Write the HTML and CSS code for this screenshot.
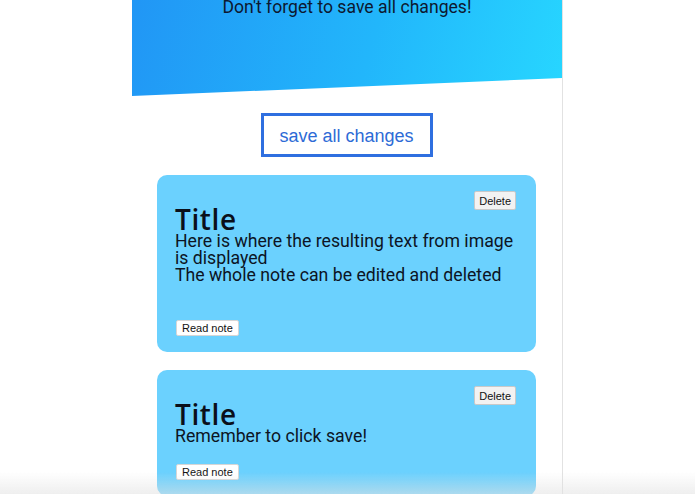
FILE: index.html
```html
<!DOCTYPE html>
<html>
<head>
<meta charset="utf-8">
<link rel="stylesheet" href="styles.css">
</head>
<body>
<div class="page">
  <header class="hero">
    <p class="hero-text">Don't forget to save all changes!</p>
  </header>
  <div class="actions">
    <button class="save-btn">save all changes</button>
  </div>
  <div class="notes">
    <div class="note">
      <div class="note-top"><button class="small-btn">Delete</button></div>
      <h2 class="note-title">Title</h2>
      <div class="note-text">Here is where the resulting text from image is displayed<br>The whole note can be edited and deleted</div>
      <button class="small-btn read-btn">Read note</button>
    </div>
    <div class="note">
      <div class="note-top"><button class="small-btn">Delete</button></div>
      <h2 class="note-title">Title</h2>
      <div class="note-text">Remember to click save!</div>
      <button class="small-btn read-btn">Read note</button>
    </div>
  </div>
  <div class="bottom-fade"></div>
</div>
</body>
</html>
```
FILE: styles.css
```css
html, body {
  margin: 0;
  padding: 0;
  background: #ffffff;
  height: 100%;
  overflow: hidden;
}
.page {
  width: 430px;
  margin: 0 auto;
  border-right: 1px solid #e2e2e2;
  min-height: 494px;
  font-family: Roboto, "Liberation Sans", sans-serif;
}
.hero {
  height: 96px;
  background: linear-gradient(105deg, #2196f5 0%, #22b6fb 55%, #27d6ff 100%);
  clip-path: polygon(0 0, 100% 0, 100% 78px, 0 96px);
  display: flex;
  justify-content: center;
}
.hero-text {
  margin: -3px 0 0;
  font-size: 17.6px;
  line-height: 20px;
  color: #0d1830;
}
.actions {
  display: flex;
  justify-content: center;
  padding-top: 17px;
}
.save-btn {
  width: 172px;
  height: 44px;
  border: 3px solid #2f6fe0;
  background: #fff;
  color: #2d6bd6;
  font-family: "Liberation Sans", Arial, sans-serif;
  font-size: 18px;
  padding: 2px 0 0;
  margin-right: 1px;
}
.notes {
  display: flex;
  flex-direction: column;
  gap: 18px;
  padding: 18px 26px 0 25px;
}
.note {
  background: #6bd1fe;
  border-radius: 10px;
  padding: 16px 20px 16px 18px;
  display: flex;
  flex-direction: column;
  align-items: flex-start;
}
.note-top {
  align-self: stretch;
  display: flex;
  justify-content: flex-end;
}
.small-btn {
  font-family: "Liberation Sans", Arial, sans-serif;
  font-size: 11px;
  color: #111;
  background: #f2f2f2;
  border: 1px solid #c9c9c9;
  border-radius: 2px;
  height: 19px;
  padding: 0 4px;
}
.note-title {
  margin: -4px 0 0;
  font-family: "Open Sans", sans-serif;
  font-weight: 600;
  font-size: 28px;
  line-height: 26px;
  letter-spacing: 0.6px;
  color: #0a0f1a;
}
.note-text {
  font-size: 17.7px;
  line-height: 17px;
  color: #0c1424;
  margin-top: 1px;
  min-height: 68px;
}
.note:last-child .note-text {
  min-height: 17px;
}
.read-btn {
  background: #ffffff;
  border: 1px solid #d6d6d6;
  height: 16px;
  padding: 0 5px;
  margin-top: 19px;
  margin-left: 1px;
}
.bottom-fade {
  position: fixed;
  left: 0;
  right: 0;
  bottom: 0;
  height: 22px;
  background: linear-gradient(to bottom, rgba(230,230,230,0), rgba(225,225,225,0.55));
  pointer-events: none;
}
```
